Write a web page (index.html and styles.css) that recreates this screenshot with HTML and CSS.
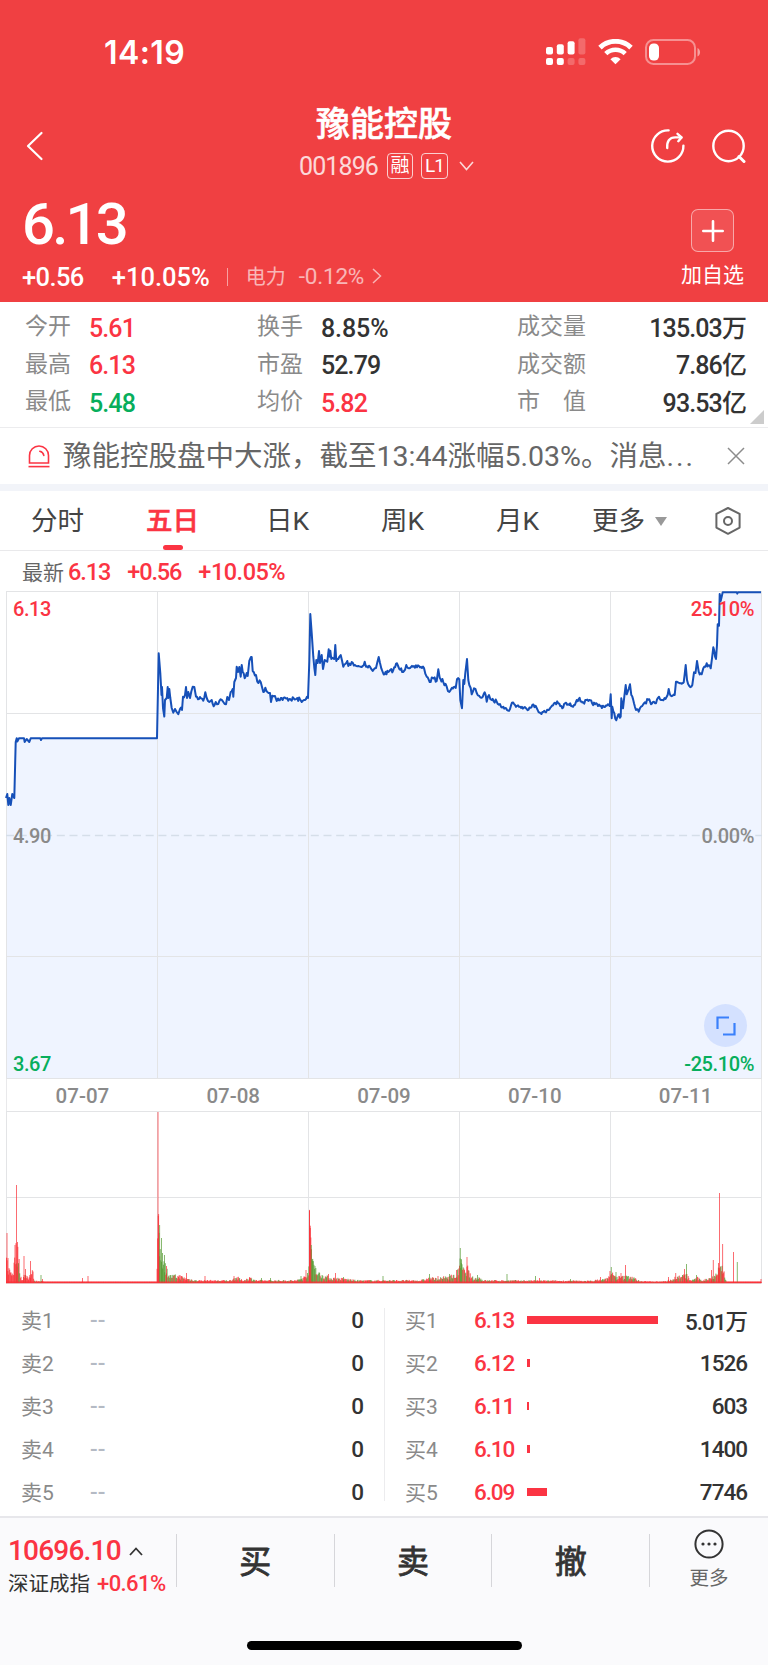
FILE: index.html
```html
<!DOCTYPE html>
<html lang="zh-CN">
<head>
  <meta charset="UTF-8" />
  <meta name="viewport" content="width=device-width, initial-scale=1" />
  <title>豫能控股 001896</title>
  <link rel="stylesheet" href="styles.css">
</head>
<body>

  <header class="header">
    <div class="status-bar">
      <span class="clock">14:19</span>
      <div class="status-icons">
        <svg class="signal" width="40" height="28" viewBox="0 0 40 28" fill="#fff">
          <rect x="0" y="9" width="7" height="7.5" rx="2" />
          <rect x="10.8" y="6.3" width="7" height="10.2" rx="2" />
          <rect x="21.6" y="3.2" width="7" height="13.3" rx="2" />
          <rect x="32.4" y="0.2" width="7" height="16.3" rx="2" opacity=".22" />
          <rect x="0" y="20" width="7" height="7" rx="2" />
          <rect x="10.8" y="20" width="7" height="7" rx="2" />
          <rect x="21.6" y="20" width="7" height="7" rx="2" opacity=".22" />
          <rect x="32.4" y="20" width="7" height="7" rx="2" opacity=".22" />
        </svg>
        <svg class="wifi" width="35" height="26" viewBox="0 0 35 26">
          <path d="M2 8.6A22.4 22.4 0 0 1 33 8.6" fill="none" stroke="#fff" stroke-width="5" />
          <path d="M7.8 14.6A14 14 0 0 1 27.2 14.6" fill="none" stroke="#fff" stroke-width="4.6" />
          <path d="M17.5 25.3L12.4 20.2A7.3 7.3 0 0 1 22.6 20.2Z" fill="#fff" />
        </svg>
        <svg class="battery" width="57" height="26" viewBox="0 0 57 26">
          <rect x="1" y="1" width="49" height="24" rx="7.5" fill="none" stroke="#fff" stroke-opacity=".42" stroke-width="2" />
          <rect x="4" y="4.5" width="10" height="17" rx="4.5" fill="#fff" />
          <path d="M52.5 9v8.5c3.4-1.4 3.4-7.1 0-8.5z" fill="#fff" fill-opacity=".5" />
        </svg>
      </div>
    </div>

    <div class="nav">
      <div class="nav-side">
        <svg width="18" height="30" viewBox="0 0 18 30" fill="none" stroke="#fff" stroke-width="2.2" stroke-linecap="round" stroke-linejoin="round">
          <path d="M15.5 2L2 15l13.5 13" />
        </svg>
      </div>
      <div class="nav-title">
        <h1>豫能控股</h1>
        <div class="code-row">
          <span class="code">001896</span>
          <span class="badge">融</span>
          <span class="badge badge-dim">L1</span>
          <svg width="15" height="10" viewBox="0 0 15 10" fill="none" stroke="#fff" stroke-opacity=".8" stroke-width="1.6">
            <path d="M1 1l6.5 7.5L14 1" />
          </svg>
        </div>
      </div>
      <div class="nav-side nav-right">
        <svg width="36" height="36" viewBox="0 0 36 36" fill="none" stroke="#fff" stroke-width="2.4" stroke-linecap="round" stroke-linejoin="round">
          <path d="M18.6 2.4A15.6 15.6 0 1 0 33.4 17.6" />
          <path d="M17.2 20c-.5-6.5 2.2-10.6 8-10.6h6" />
          <path d="M27.5 5.8L31.6 9.4 28.3 13.2" />
        </svg>
        <svg width="36" height="36" viewBox="0 0 36 36" fill="none" stroke="#fff" stroke-width="2.4" stroke-linecap="round">
          <circle cx="18.5" cy="18" r="15.2" />
          <path d="M29 28.5l5 5" stroke-width="3" />
        </svg>
      </div>
    </div>

    <div class="quote">
      <div>
        <div class="price">6.13</div>
        <div class="change-row">
          <span class="change">+0.56</span>
          <span class="percent">+10.05%</span>
          <span class="split"></span>
          <span class="sector">电力</span>
          <span class="sector-pct">-0.12%</span>
          <svg width="10" height="16" viewBox="0 0 10 16" fill="none" stroke="#fff" stroke-opacity=".6" stroke-width="1.5">
            <path d="M1 1l7.5 7L1 15" />
          </svg>
        </div>
      </div>
      <div class="add">
        <div class="add-box">
          <svg width="22" height="22" viewBox="0 0 22 22" stroke="#fff" stroke-width="2.6" stroke-linecap="round">
            <path d="M11 1.3v19.4M1.3 11h19.4" />
          </svg>
        </div>
        <span>加自选</span>
      </div>
    </div>
  </header>

  <section class="stats">
    <div class="stat"><span>今开</span><b class="up">5.61</b></div>
    <div class="stat"><span>换手</span><b class="pct">8.85%</b></div>
    <div class="stat wide"><span>成交量</span><b>135.03万</b></div>
    <div class="stat"><span>最高</span><b class="up">6.13</b></div>
    <div class="stat"><span>市盈</span><b>52.79</b></div>
    <div class="stat wide"><span>成交额</span><b>7.86亿</b></div>
    <div class="stat"><span>最低</span><b class="down">5.48</b></div>
    <div class="stat"><span>均价</span><b class="up">5.82</b></div>
    <div class="stat wide"><span>市　值</span><b>93.53亿</b></div>
    <i class="corner"></i>
  </section>

  <section class="notice">
    <svg width="22" height="23" viewBox="0 0 22 23" fill="none" stroke="#fb3443" stroke-width="1.6">
      <path d="M1.5 18V10.5a9.5 9.5 0 0 1 19 0V18z" />
      <path d="M11.8 6.2c2.3.5 3.6 1.900 4 4.2" stroke-linecap="round" />
      <path d="M.5 21.6h21" />
    </svg>
    <p>豫能控股盘中大涨，截至13:44涨幅5.03%。消息<span class="dots">...</span></p>
    <svg width="18" height="18" viewBox="0 0 18 18" stroke="#8c8c8c" stroke-width="1.5">
      <path d="M1 1l16 16M17 1L1 17" />
    </svg>
  </section>

  <nav class="tabs">
    <a class="tab">分时</a>
    <a class="tab active">五日</a>
    <a class="tab">日K</a>
    <a class="tab">周K</a>
    <a class="tab">月K</a>
    <a class="tab-more">更多<i></i></a>
    <svg width="28" height="30" viewBox="0 0 28 30" fill="none" stroke="#666" stroke-width="2" stroke-linejoin="round">
      <path d="M14 2l11.6 5.8v13.8L14 27.8 2.4 21.6V7.8z" />
      <circle cx="14" cy="15" r="4" />
    </svg>
  </nav>

  <div class="latest">
    <span>最新</span><b>6.13</b><b>+0.56</b><b class="pct">+10.05%</b>
  </div>

  <section class="chart">
    <div class="price-chart">
      <svg id="priceSvg" width="768" height="488" viewBox="0 0 768 488"></svg>
      <span class="axis top-left up">6.13</span>
      <span class="axis top-right up">25.10%</span>
      <span class="axis mid-left">4.90</span>
      <span class="axis mid-right">0.00%</span>
      <span class="axis bottom-left down">3.67</span>
      <span class="axis bottom-right down">-25.10%</span>
      <div class="expand">
        <svg width="20" height="20" viewBox="0 0 20 20" fill="none" stroke="#3a80fb" stroke-width="2.2">
          <path d="M1.5 13V1.5H13M18.5 7v11.5H7" />
        </svg>
      </div>
    </div>
    <div class="dates">
      <span>07-07</span><span>07-08</span><span>07-09</span><span>07-10</span><span>07-11</span>
    </div>
    <svg id="volumeSvg" width="768" height="173" viewBox="0 0 768 173"></svg>
  </section>

  <section class="book">
    <ul id="sellList" class="sell"></ul>
    <ul id="buyList" class="buy"></ul>
  </section>

  <footer class="footer">
    <div class="actions">
      <div class="index">
        <div class="index-value">10696.10
          <svg width="14" height="9" viewBox="0 0 14 9" fill="none" stroke="#333" stroke-width="1.8"><path d="M1 8l6-6.5L13 8" /></svg>
        </div>
        <div class="index-name">深证成指 <b>+0.61%</b></div>
      </div>
      <a class="action">买</a>
      <a class="action">卖</a>
      <a class="action">撤</a>
      <a class="action more">
        <svg width="30" height="30" viewBox="0 0 30 30">
          <circle cx="15" cy="15" r="13.6" fill="none" stroke="#333" stroke-width="2" />
          <g fill="#333"><circle cx="9" cy="15" r="1.6" /><circle cx="15" cy="15" r="1.6" /><circle cx="21" cy="15" r="1.6" /></g>
        </svg>
        更多
      </a>
    </div>
    <div class="home-bar"></div>
  </footer>

  <script src="script.js"></script>
</body>
</html>
```

FILE: styles.css
```css
* {
  box-sizing: border-box;
}
body {
  margin: 0;
  width: 768px;
  background: #fff;
  color: #333;
  font-family: Roboto, "Noto Sans CJK SC", sans-serif;
  overflow-x: hidden;
}
h1, p, ul {
  margin: 0;
  padding: 0;
}
ul {
  list-style: none;
}
svg {
  display: block;
  flex: none;
}
b {
  font-weight: 500;
}
.up {
  color: #fb3443;
}
.down {
  color: #07ae5c;
}

/* header */
.header {
  height: 302px;
  background: #f04042;
  color: #fff;
}
.status-bar {
  height: 104px;
  display: flex;
  align-items: center;
  justify-content: space-between;
  padding: 0 66px 0 104px;
}
.clock {
  font-family: Inter, sans-serif;
  font-size: 32px;
  font-weight: 600;
  letter-spacing: 0.4px;
  padding-top: 1px;
}
.status-icons {
  display: flex;
  align-items: center;
}
.wifi {
  margin: 0 12px 0 12.5px;
}
.nav {
  height: 85px;
  display: grid;
  grid-template-columns: 150px 1fr 150px;
}
.nav-side {
  height: 83px;
  display: flex;
  align-items: center;
  padding-left: 26px;
}
.nav-right {
  justify-content: flex-end;
  gap: 24px;
  padding: 0 22px 0 0;
}
.nav-title {
  text-align: center;
}
h1 {
  font-size: 34px;
  font-weight: 500;
  line-height: 41px;
  -webkit-text-stroke: 0.6px #fff;
}
.code-row {
  height: 42px;
  display: flex;
  align-items: center;
  justify-content: center;
  padding-left: 5px;
}
.code {
  font-size: 25px;
  letter-spacing: -0.9px;
  opacity: .8;
}
.badge {
  width: 26px;
  height: 26px;
  margin-left: 9px;
  border: 1.5px solid rgba(255, 255, 255, .75);
  border-radius: 4px;
  font-size: 19px;
  line-height: 24px;
  display: flex;
  justify-content: center;
}
.badge-dim {
  width: 27px;
  margin-right: 11px;
  border-width: 1px;
  margin-left: 8px;
  letter-spacing: -1px;
}
.quote {
  display: flex;
  justify-content: space-between;
  padding: 4px 24px 0 22px;
}
.price {
  height: 58px;
  font-size: 58px;
  font-weight: 500;
  line-height: 62px;
  letter-spacing: -2.8px;
}
.change-row {
  height: 50px;
  display: flex;
  align-items: center;
  font-size: 25.5px;
  font-weight: 500;
  padding-top: 1px;
}
.change {
  letter-spacing: -0.6px;
}
.percent {
  margin-left: 28px;
}
.split {
  width: 1px;
  height: 18px;
  margin: 0 18px 0 17px;
  background: rgba(255, 255, 255, .5);
}
.sector,
.sector-pct {
  font-size: 20px;
  font-weight: 400;
  opacity: .62;
}
.sector-pct {
  font-size: 22.5px;
  margin: 0 8px 0 13px;
  letter-spacing: -0.2px;
}
.change-row svg,
.sector,
.sector-pct {
  position: relative;
  top: -1px;
}
.add {
  width: 63px;
  padding-top: 16px;
  text-align: center;
  font-size: 21px;
  line-height: 46px;
}
.add-box {
  width: 43px;
  height: 43px;
  margin: 0 auto;
  border: 1px solid rgba(255, 255, 255, .5);
  border-radius: 7px;
  background: rgba(255, 255, 255, .09);
  display: flex;
  align-items: center;
  justify-content: center;
}

/* stats */
.stats {
  position: relative;
  height: 126px;
  padding: 7px 22px 0 25px;
  border-bottom: 1px solid #ececee;
  display: grid;
  grid-template-columns: 232px 260px 1fr;
  grid-auto-rows: 37.5px;
}
.stat {
  display: flex;
  align-items: center;
  line-height: 36px;
}
.stat span {
  width: 64px;
  font-size: 23px;
  color: #8a8a8a;
  padding-bottom: 1px;
}
.stat b {
  font-size: 25px;
  padding-top: 2px;
  letter-spacing: -0.9px;
}
.stat b.pct {
  letter-spacing: -0.1px;
}
.stat.wide {
  justify-content: space-between;
}
.stat.wide span {
  width: auto;
}
.corner {
  position: absolute;
  right: 4px;
  bottom: 3px;
  border-left: 14px solid transparent;
  border-bottom: 14px solid #ccc;
}

/* notice */
.notice {
  height: 56px;
  display: flex;
  align-items: center;
  padding: 0 23px 0 28px;
}
.notice p {
  flex: 1;
  margin-left: 13px;
  padding-top: 2px;
  font-size: 28.5px;
  line-height: 54px;
  color: #666;
  white-space: nowrap;
}
.dots {
  letter-spacing: 2px;
}

/* tabs */
.tabs {
  height: 67px;
  border-top: 7px solid #f2f4f9;
  border-bottom: 1px solid #e9e9eb;
  display: flex;
  align-items: center;
  font-size: 26.5px;
  color: #444;
}
.tab {
  position: relative;
  width: 115px;
  line-height: 60px;
  height: 59px;
  text-align: center;
}
.tab.active {
  color: #fb3443;
  font-weight: 500;
  -webkit-text-stroke: 0.6px #fb3443;
}
.tab.active::after {
  content: "";
  position: absolute;
  left: 48px;
  bottom: 0;
  width: 20px;
  height: 5px;
  border-radius: 3px;
  background: #fb3443;
}
.tab-more {
  flex: 1;
  display: flex;
  align-items: center;
  padding-left: 17px;
  line-height: 60px;
}
.tab-more i {
  margin: 2px 0 0 10px;
  border: 6.5px solid transparent;
  border-top: 9px solid #999;
  border-bottom: 0;
}
.tabs svg {
  margin-right: 26px;
}
.latest {
  height: 40px;
  display: flex;
  align-items: center;
  padding: 2px 0 0 22px;
  font-size: 23.5px;
  color: #fb3443;
}
.latest span {
  font-size: 21px;
  color: #666;
  margin: 0 4px 2px 0;
}
.latest b {
  margin-right: 17px;
  letter-spacing: -1.1px;
}
.latest b.pct {
  letter-spacing: -0.5px;
}

/* chart */
.price-chart {
  position: relative;
  height: 488px;
}
.axis {
  position: absolute;
  font-size: 20px;
  font-weight: 500;
  line-height: 20px;
  letter-spacing: -0.4px;
  color: #8a8a8a;
}
.axis.up {
  color: #fb3443;
}
.axis.down {
  color: #07ae5c;
}
.top-left, .mid-left, .bottom-left {
  left: 13px;
}
.top-right, .mid-right, .bottom-right {
  right: 14px;
}
.top-left, .top-right {
  top: 8px;
}
.mid-left, .mid-right {
  top: 235px;
}
.bottom-left, .bottom-right {
  bottom: 5px;
}
.expand {
  position: absolute;
  right: 21px;
  bottom: 32px;
  width: 43px;
  height: 43px;
  border-radius: 50%;
  background: #d4e1ff;
  display: flex;
  align-items: center;
  justify-content: center;
}
.dates {
  height: 32px;
  margin: 0 6px;
  border-left: 1px solid #e9e9eb;
  border-right: 1px solid #e9e9eb;
  display: flex;
  font-size: 20.5px;
  line-height: 34px;
  color: #8a8a8a;
  font-weight: 500;
}
.dates span {
  flex: 1;
  text-align: center;
}

/* order book */
.book {
  display: flex;
  padding: 14px 21px 0 21px;
  height: 232px;
}
.book li {
  height: 43px;
  display: flex;
  align-items: center;
  font-size: 22.5px;
}
.sell {
  width: 364px;
  padding-right: 22px;
  position: relative;
}
.sell::after {
  content: "";
  position: absolute;
  right: 0;
  top: 10px;
  width: 1px;
  height: 193px;
  background: #ececee;
}
.buy {
  flex: 1;
  padding-left: 20px;
}
.level {
  width: 69px;
  font-size: 21px;
  color: #8a8a8a;
  padding-bottom: 1px;
}
.none {
  color: #b4bac4;
  font-weight: 500;
}
.qty {
  margin-left: auto;
  font-weight: 500;
  letter-spacing: -1px;
}
.bid {
  width: 53px;
  color: #fb3443;
  font-weight: 500;
  letter-spacing: -1.1px;
}
.bar {
  height: 8px;
  background: #fb3443;
}

/* footer */
.footer {
  height: 149px;
  border-top: 2px solid #e7e7eb;
  background: #fafafc;
}
.actions {
  height: 123px;
  display: flex;
}
.index {
  width: 176px;
  padding: 15px 0 0 8px;
}
.index-value {
  display: flex;
  align-items: center;
  gap: 8px;
  font-size: 28px;
  line-height: 36px;
  font-weight: 500;
  letter-spacing: -0.8px;
  color: #fb3443;
}
.index-name {
  font-size: 20.5px;
  line-height: 30px;
  white-space: nowrap;
}
.index-name b {
  margin-left: 2px;
  font-size: 22px;
  letter-spacing: -0.6px;
  color: #fb3443;
}
.action {
  width: 157.7px;
  height: 53px;
  margin-top: 16px;
  border-left: 1px solid #d6d6da;
  font-size: 32px;
  line-height: 57px;
  text-align: center;
  -webkit-text-stroke: 0.8px #333;
}
.more {
  flex: 1;
  font-size: 19.5px;
  line-height: 26px;
  color: #666;
  -webkit-text-stroke: 0;
}
.more svg {
  margin: -5px auto 7px;
}
.home-bar {
  width: 275px;
  height: 9px;
  margin: 0 auto;
  border-radius: 5px;
  background: #000;
}
```

FILE: script.js
```js
// seeded random so that the minute noise is the same on every load
let seed = 7;
function rand() {
  seed = (seed * 16807) % 2147483647;
  return seed / 2147483647;
}

const dayLines = [157.5, 308.5, 459.5, 610.5];

// five day price line: x y pairs, one row of text per stretch
const priceData = `
6 207 7.3 203 8.3 214 9.3 207 10.7 214 12.3 203 14.3 207 15.7 151 16.7 147.3 17.3 150.5 19 147.3 24 147.3 24.7 151 26.7 148 29.3 151 30.7 147.3 40.3 147.3 41 149 42 147.3 157 147.3
158.7 62.3 160.3 82 161.5 104 162 96 163 117 164.3 125.5 165 109 166.7 107 167.7 96 168.3 107 169.3 98 170.3 107 171.7 117 173.3 121.7 175 118 176.7 121 178.3 123.3 180 118 182 119 183 105.7 185 104 186 96 187 107 188.3 101 190 107 192.7 95.7 194.3 96 196 105.7 198 108.3 200 106 203.3 109.7 205.3 101.3 206.7 107 209.3 111 211.7 109 213.7 115.3 215.7 111 218.3 113 220.7 108.3 223.3 111 226 113.3 227.3 106 229 109 230.7 101 232.7 98 233.3 105.7 234.3 91 236 87 236.7 75.7 238 81 239.3 76 240.7 85.7 241.7 74 242.7 81 244.7 87.3 246.7 82 247.7 85 249.3 70 251 66 251.7 66 252.7 80 256 84 257.3 90.7 260.7 91 263.3 101 265.3 96.7 267.3 101 270 102 271 111 272.3 104.7 275 105 276.7 110 278 107.5 290 108 300 108.3 301.7 111 305 109 307 105.7 308 107
309.3 70.7 310.3 23 311.7 42 313.3 65.7 315.3 84 316.3 69 317.7 72 319 60 320 72 321.7 64 323 78 324.7 69 327.3 70.7 328.7 58.3 329.7 65.7 330.3 59.7 331.3 68 334.3 68 335.3 54 336.3 70 338.3 68 340.7 64 343.3 75.7 347.3 70 348.3 75 351.7 71 355 74 358.3 75 361.7 76 364.7 70.7 366 75.7 370 75.7 372.7 80 376 77 378.7 66 380 72 382.7 81 384.7 83 388.3 81 393.3 79 397 72.3 399.3 78 404 80 406.3 74 410 77 415 76.7 419 75 424 77 426.7 85.7 429.7 91 432.7 86.7 436.7 90 438.3 78.3 439.7 86.7 443.3 91 446.7 95.7 449.3 101 452 96.7 455.7 97 457 88.3 459.3 88.3
460.3 109 462 117.3 463.3 89 464.3 93 465.3 82 467 68 468.3 89 469.3 94 470.7 97 471.7 103.3 474 97.3 476.7 102 479 104.7 481.7 106.7 484.7 101.3 486.7 110.7 489 104 491.7 109 496.7 110.7 500 113 503.3 115.7 507 119 510 118 512 111.7 515 114 520 115.7 526.7 118 532.3 114 536.7 117 538.7 121.3 543.3 121 546 121.3 548.3 119 554 112.3 558.3 112.3 562.3 117.3 565 112.3 569.3 114 574 114 576.7 109 578.7 108 583.3 111.3 588.3 110 595 113.3 600 115 609.7 115
610.7 103.3 611.7 127.3 612.3 115.7 614.3 122.3 616.3 129.3 618 124 620.7 125.7 621.3 107.3 623 117.3 624.3 105.7 625.7 94 626.7 103.3 628.7 98 630 93.3 631.3 104 634 112.3 636 119 638.7 120.7 641 115.7 645 111.3 649.3 108.3 651 113.3 656 112.3 659 105.7 662.3 109 666.7 105.7 668.7 98 670.7 104.7 674.7 104 676 90.7 680 92.3 683.7 91.3 685.7 74 687 89 689.3 95 692.3 94 694 81.3 695.5 82 697 70 698.7 80.7 701.7 83.3 703.3 77.3 706.7 72.3 710.7 77.3 712 67.3 713.3 56.3 716 68 717 54 717.7 33.3 719 34.7 719.7 3 720.7 10 722.7 1.3 736.7 1.3 737.3 2.6 738 1.3 761 1.3`;

function drawPrice() {
  const n = priceData.trim().split(/\s+/).map(Number);
  const pts = [];
  for (let i = 0; i < n.length; i += 2) {
    const x = n[i], y = n[i + 1];
    const last = pts[pts.length - 1];
    // small ticks on the quiet stretches, none while limit-up
    if (last && x > 158 && x < 720) {
      const steps = Math.floor((x - last[0]) / 0.9);
      for (let s = 1; s < steps; s++) {
        const t = s / steps;
        pts.push([last[0] + (x - last[0]) * t, last[1] + (y - last[1]) * t + (rand() - 0.5) * 4]);
      }
    }
    pts.push([x, y]);
  }
  const line = pts.map(p => p[0].toFixed(1) + ',' + p[1].toFixed(1)).join(' ');
  let grid = '';
  dayLines.forEach(x => grid += `<path d="M${x} .5V487.5"/>`);
  document.getElementById('priceSvg').innerHTML = `
    <polygon points="6,487.5 ${line} 761,487.5" fill="#eff4ff"/>
    <g fill="none" stroke="#e3e4e6">
      <path d="M6 .5H762M6 122.5H762M6 365.5H762M6 487.5H762M6.5 0V488M761.5 0V488"/>${grid}
      <path d="M6 244.5H762" stroke="#d5dee9" stroke-width="1.5" stroke-dasharray="8 4.7"/>
    </g>
    <polyline points="${line}" fill="none" stroke="#1650b8" stroke-width="2" stroke-linejoin="round"/>`;
}

// average volume height along x, then the single bars that stick out
const volumeBase = [[6, 24], [8, 14], [11, 11], [13, 12], [15, 34], [18, 30], [20, 8], [22, 2], [24, 9], [28, 6], [32, 12], [34, 2], [40, 2], [44, 1.2], [156, 1.2],
  [158, 60], [160, 28], [163, 24], [166, 13], [170, 7], [178, 7], [186, 4.5], [196, 2.5], [230, 2.5], [236, 6], [242, 2.5], [250, 5], [256, 2.5], [296, 2.5], [304, 6], [308, 12],
  [309, 60], [311, 34], [313, 22], [317, 10], [324, 7], [330, 5], [345, 4], [356, 2.5], [380, 2.5], [420, 2.5], [430, 5], [437, 4], [450, 7], [456, 7],
  [460, 22], [464, 11], [467, 15], [470, 7], [474, 4], [478, 6], [483, 2.5], [500, 2.5], [590, 2], [606, 4], [610, 11], [615, 6], [625, 6], [630, 7], [635, 4], [640, 1.5], [665, 1.5],
  [676, 6], [686, 8], [690, 2.5], [697, 5], [702, 2.5], [712, 6], [717, 11], [720, 19], [723, 13], [726, 1.2], [761, 1.2]];
const volumeSpikes = [[7, 50, 'r'], [8, 25, 'r'], [15, 38, 'r'], [16.5, 98, 'r'], [17.5, 41, 'r'], [24, 27, 'r'], [25.5, 14, 'r'], [30.5, 22, 'r'], [41, 8, 'g'], [42.5, 4, 'r'], [82.5, 5, 'r'], [88, 7, 'r'],
  [158, 171, 'r'], [158.6, 69, 'r'], [159.6, 58, 'g'], [161.5, 45, 'g'], [162.5, 30, 'g'], [164.5, 28, 'g'], [166.5, 17, 'r'], [180, 8, 'r'], [186.5, 10, 'r'], [205, 7, 'r'], [234, 7, 'r'], [249.5, 6, 'r'], [261.5, 5, 'g'], [270.5, 5, 'g'], [301, 7, 'g'], [306, 13, 'r'],
  [309.5, 72, 'r'], [310.3, 55, 'r'], [311.3, 38, 'g'], [312.5, 22, 'g'], [315, 17, 'g'], [328.5, 9, 'r'], [335.5, 10, 'r'], [343.5, 6, 'g'], [383, 7, 'g'], [429.5, 9, 'g'], [438, 7, 'r'], [449.5, 9, 'g'], [456.5, 13, 'r'],
  [460.3, 35, 'g'], [461.3, 20, 'g'], [467, 26, 'r'], [477.5, 8, 'g'], [507, 9, 'g'], [535.5, 7, 'g'], [539.5, 5, 'r'], [570.5, 4, 'g'], [600.5, 6, 'r'], [611.3, 16, 'g'], [616, 11, 'g'], [621, 10, 'r'], [625.5, 18, 'r'], [668.5, 6, 'r'],
  [675.7, 10, 'r'], [684.5, 14, 'r'], [686.5, 19, 'g'], [696.5, 8, 'g'], [711.5, 13, 'r'], [713.3, 23, 'r'], [718.5, 20, 'r'], [719.5, 90, 'r'], [722.6, 39, 'r'], [733.5, 31, 'r'], [737.3, 21, 'g'], [761, 4, 'r']];

function drawVolume() {
  const base = 172;
  let bars = '';
  const bar = (x, h, green, o) => {
    bars += `<rect x="${x.toFixed(1)}" y="${(base - h).toFixed(1)}" width="1" height="${h.toFixed(1)}" fill="${green ? '#559b33' : '#fa2d35'}" opacity="${o}"/>`;
  };
  let k = 0;
  for (let x = 6; x < 761; x += 0.63) {
    while (volumeBase[k + 1][0] < x) k++;
    const a = volumeBase[k], b = volumeBase[k + 1];
    const h = a[1] + (b[1] - a[1]) * (x - a[0]) / (b[0] - a[0]);
    const quiet = h < 1.5;
    const afterOpen = (x > 159.5 && x < 178) || (x > 311 && x < 325) || (x > 460 && x < 464);
    const green = !quiet && rand() < (afterOpen ? 0.8 : x < 50 ? 0.2 : 0.42);
    bar(x, quiet ? h : h * (0.5 + rand() * 0.75), green, 0.8);
  }
  volumeSpikes.forEach(s => bar(s[0] - 0.5, s[1], s[2] === 'g', 0.7));
  let grid = '';
  dayLines.forEach(x => grid += `<path d="M${x} 0V172"/>`);
  document.getElementById('volumeSvg').innerHTML = `
    <g fill="none" stroke="#e3e4e6"><path d="M6 .5H762M6 86.5H762M6 172.5H762M6.5 0V172M761.5 0V172"/>${grid}</g>
    ${bars}
    <rect x="6" y="170.5" width="755" height="1.8" fill="#fa2d35" opacity=".8"/>`;
}

const buys = [
  { price: '6.13', qty: '5.01万', bar: 131 },
  { price: '6.12', qty: '1526', bar: 3 },
  { price: '6.11', qty: '603', bar: 1.5 },
  { price: '6.10', qty: '1400', bar: 3 },
  { price: '6.09', qty: '7746', bar: 20 }
];

function renderBook() {
  document.getElementById('sellList').innerHTML = buys.map((b, i) =>
    `<li><span class="level">卖${i + 1}</span><span class="none">--</span><span class="qty">0</span></li>`).join('');
  document.getElementById('buyList').innerHTML = buys.map((b, i) =>
    `<li><span class="level">买${i + 1}</span><span class="bid">${b.price}</span><span class="bar" style="width:${b.bar}px"></span><span class="qty">${b.qty}</span></li>`).join('');
}

drawPrice();
drawVolume();
renderBook();
```
